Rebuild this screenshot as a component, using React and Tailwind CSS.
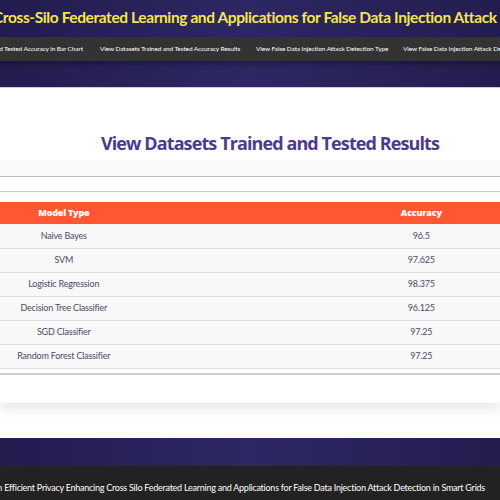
import React from "react";

const rows = [
  ["Naive Bayes", "96.5"],
  ["SVM", "97.625"],
  ["Logistic Regression", "98.375"],
  ["Decision Tree Classifier", "96.125"],
  ["SGD Classifier", "97.25"],
  ["Random Forest Classifier", "97.25"],
];

export default function App() {
  return (
    <div className="w-[500px] h-[500px] overflow-hidden bg-white font-['Lato',sans-serif]">
      {/* header */}
      <header className="h-[88px] bg-gradient-to-r from-[#221c4f] via-[#2d2863] to-[#231d4f] border-b border-[#cfcfcf]">
        <div className="h-[37px] pt-[6px]">
          <h1 className="flex whitespace-nowrap ml-[-412px] text-[15.5px] font-bold text-[#f4e64c] tracking-[-0.4px]">
            <span className="w-[400px] shrink-0 text-right">An Efficient Privacy Enhancing</span>
            <span className="pl-[5px]">Cross-Silo Federated Learning and Applications for False Data Injection Attack Detection in Smart Grids</span>
          </h1>
        </div>
        <nav className="h-[24px] bg-[#333333] shadow-[0_3px_6px_rgba(0,0,0,0.35)] flex items-center ml-[-84px] w-[700px] gap-[17px] text-[6.5px] text-white tracking-[-0.1px]">
          <a className="w-[167px] shrink-0 text-right whitespace-nowrap">View Datasets Trained and Tested Accuracy in Bar Chart</a>
          <a className="w-[139px] shrink-0 text-center whitespace-nowrap">View Datasets Trained and Tested Accuracy Results</a>
          <a className="w-[130px] shrink-0 text-center whitespace-nowrap">View False Data Injection Attack Detection Type</a>
          <a className="w-[170px] shrink-0 text-left whitespace-nowrap">View False Data Injection Attack Detection Type Ratio</a>
        </nav>
      </header>

      {/* content card */}
      <main className="pt-[38px]">
        <h2 className="flex justify-center pl-[40px] text-[18px] font-bold text-[#4e3a8c] font-['Open_Sans',sans-serif] tracking-[-0.9px] h-[34px] leading-[34px]">
          View Datasets Trained and Tested Results
        </h2>
        <div className="h-[16px] bg-[#fafafa]" />
        <div className="border-t border-[#bdbdbd] h-[15px]" />
        <div className="border-t border-[#cccccc] h-[11px]" />
        <table className="ml-[-115px] w-[715px] border-collapse text-[9px] tracking-[-0.2px] text-[#4f4a63]">
          <thead>
            <tr className="bg-[#ff5733] h-[22px]">
              <th className="w-1/2 text-white font-extrabold text-[9px] font-['Open_Sans',sans-serif]">Model Type</th>
              <th className="w-1/2 text-white font-extrabold text-[9px] font-['Open_Sans',sans-serif]">Accuracy</th>
            </tr>
          </thead>
          <tbody>
            {rows.map(([m, a]) => (
              <tr key={m} className="h-[24px] bg-[#f8f8f8] border-b border-[#dddddd]">
                <td className="text-center">{m}</td>
                <td className="text-center">{a}</td>
              </tr>
            ))}
          </tbody>
        </table>
        <div className="mt-[4px] h-[30px] border-t-2 border-[#cfcfcf] bg-white shadow-[0_8px_12px_rgba(0,0,0,0.08)]" />
        <div className="h-[35px]" />
      </main>

      {/* footer */}
      <div className="h-[28px] bg-gradient-to-r from-[#221c4f] via-[#2d2863] to-[#231d4f]" />
      <footer className="h-[40px] bg-[#222222] flex justify-end pr-[15px] pt-[15px]">
        <p className="whitespace-nowrap text-[9px] tracking-[-0.25px] text-white">
          An Efficient Privacy Enhancing Cross Silo Federated Learning and Applications for False Data Injection Attack Detection in Smart Grids
        </p>
      </footer>
    </div>
  );
}
